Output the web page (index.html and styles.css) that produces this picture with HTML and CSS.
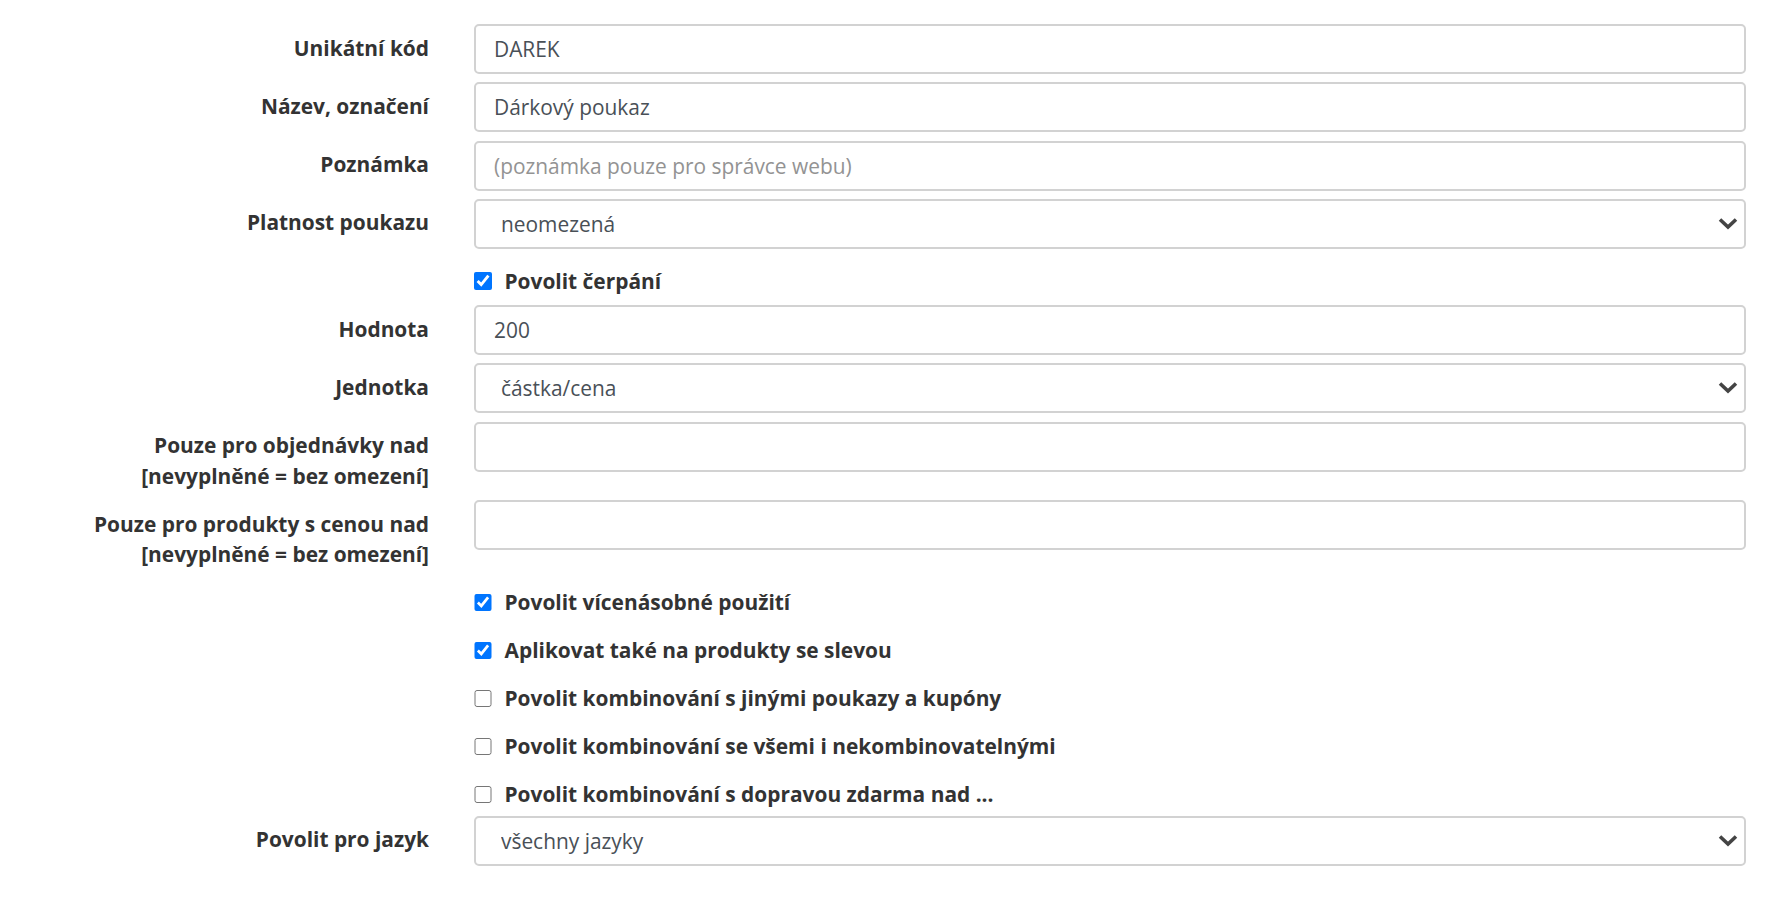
FILE: index.html
```html
<!DOCTYPE html>
<html lang="cs">
<head>
<meta charset="utf-8">
<title>Dárkový poukaz</title>
<link rel="stylesheet" href="styles.css">
</head>
<body>
<form class="form">
  <div class="row">
    <label class="lbl">Unikátní kód</label>
    <div class="ctl"><input class="field" type="text" value="DAREK"></div>
  </div>
  <div class="row">
    <label class="lbl">Název, označení</label>
    <div class="ctl"><input class="field" type="text" value="Dárkový poukaz"></div>
  </div>
  <div class="row">
    <label class="lbl">Poznámka</label>
    <div class="ctl"><input class="field" type="text" placeholder="(poznámka pouze pro správce webu)"></div>
  </div>
  <div class="row">
    <label class="lbl">Platnost poukazu</label>
    <div class="ctl select-wrap">
      <select class="field select"><option>neomezená</option></select>
      <svg class="chev" width="20" height="13" viewBox="0 0 20 13"><polyline points="2,2.5 10,10 18,2.5" fill="none" stroke="#444" stroke-width="3.6"/></svg>
    </div>
  </div>
  <div class="check-row">
    <label class="check"><input type="checkbox" checked><span>Povolit čerpání</span></label>
  </div>
  <div class="row">
    <label class="lbl">Hodnota</label>
    <div class="ctl"><input class="field" type="text" value="200"></div>
  </div>
  <div class="row">
    <label class="lbl">Jednotka</label>
    <div class="ctl select-wrap">
      <select class="field select"><option>částka/cena</option></select>
      <svg class="chev" width="20" height="13" viewBox="0 0 20 13"><polyline points="2,2.5 10,10 18,2.5" fill="none" stroke="#444" stroke-width="3.6"/></svg>
    </div>
  </div>
  <div class="row">
    <label class="lbl">Pouze pro objednávky nad<br>[nevyplněné = bez omezení]</label>
    <div class="ctl"><input class="field" type="text"></div>
  </div>
  <div class="row">
    <label class="lbl">Pouze pro produkty s cenou nad<br>[nevyplněné = bez omezení]</label>
    <div class="ctl"><input class="field" type="text"></div>
  </div>
  <div class="check-group">
    <div class="check-row">
      <label class="check"><input type="checkbox" checked><span>Povolit vícenásobné použití</span></label>
    </div>
    <div class="check-row">
      <label class="check"><input type="checkbox" checked><span>Aplikovat také na produkty se slevou</span></label>
    </div>
    <div class="check-row">
      <label class="check"><input type="checkbox"><span>Povolit kombinování s jinými poukazy a kupóny</span></label>
    </div>
    <div class="check-row">
      <label class="check"><input type="checkbox"><span>Povolit kombinování se všemi i nekombinovatelnými</span></label>
    </div>
    <div class="check-row">
      <label class="check"><input type="checkbox"><span>Povolit kombinování s dopravou zdarma nad ...</span></label>
    </div>
  </div>
  <div class="row">
    <label class="lbl">Povolit pro jazyk</label>
    <div class="ctl select-wrap">
      <select class="field select"><option>všechny jazyky</option></select>
      <svg class="chev" width="20" height="13" viewBox="0 0 20 13"><polyline points="2,2.5 10,10 18,2.5" fill="none" stroke="#444" stroke-width="3.6"/></svg>
    </div>
  </div>
</form>
</body>
</html>
```

FILE: styles.css
```css
html, body {
  margin: 0;
  padding: 0;
  background: #fff;
}

body {
  font-family: "Open Sans", "Noto Sans", "DejaVu Sans", sans-serif;
  font-size: 20.9px;
  color: #333;
}

.form {
  display: flex;
  flex-direction: column;
  padding: 24px 0 0 12px;
  width: 1734px;
}

.row {
  display: grid;
  grid-template-columns: 417px 1272px;
  column-gap: 45px;
  margin-bottom: 8.3px;
}

.lbl {
  text-align: right;
  font-weight: 700;
  line-height: 30.8px;
  padding-top: 8.5px;
  color: #333;
}

.ctl {
  position: relative;
}

.field {
  box-sizing: border-box;
  width: 100%;
  height: 50px;
  border: 2px solid #d2d2d2;
  border-radius: 5px;
  padding: 0 18px;
  font-family: "Open Sans", "Noto Sans", sans-serif;
  font-size: 20.9px;
  color: #495057;
  background: #fff;
  outline: none;
}

.field::placeholder {
  color: #939393;
}

.select {
  -webkit-appearance: none;
  appearance: none;
  padding-left: 25px;
}

.chev {
  position: absolute;
  right: 8px;
  top: 18px;
  pointer-events: none;
}

.check-row {
  margin-left: 462px;
  height: 48px;
  display: flex;
  align-items: center;
}

.check-group {
  margin-bottom: -3px;
}

.check {
  display: flex;
  align-items: center;
  font-weight: 700;
  color: #333;
  line-height: 30.8px;
}

.check input {
  width: 17.5px;
  height: 17.5px;
  margin: 0 13px 0 0;
  accent-color: #0075ff;
}
```
